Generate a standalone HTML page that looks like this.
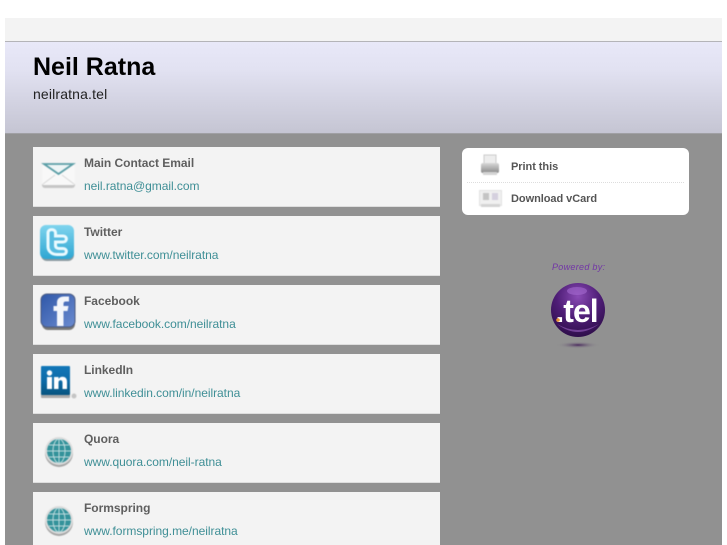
<!DOCTYPE html>
<html><head><meta charset="utf-8">
<style>
html,body{margin:0;padding:0;background:#fff;width:727px;height:545px;overflow:hidden;font-family:"Liberation Sans",sans-serif}
#wrap{position:absolute;left:5px;top:18px;width:717px;height:527px;background:#919191;overflow:hidden}
#top{position:absolute;left:0;top:0;width:717px;height:23px;background:#f3f3f3;border-bottom:1px solid #b4b4b8}
#hd{position:absolute;left:0;top:24px;width:717px;height:91px;background:linear-gradient(#e8e8f8,#e2e2f2 30%,#d3d3e2 65%,#c5c5d3);border-bottom:1px solid #a0a0a4}
h1{position:absolute;left:28px;top:35px;margin:0;font-size:25px;line-height:28px;font-weight:bold;color:#000;white-space:nowrap}
.sub{position:absolute;left:28px;top:68px;font-size:14px;line-height:17px;color:#222;white-space:nowrap;letter-spacing:.15px}
.card{position:absolute;left:28px;width:407px;height:59px;background:#f3f3f3;border-bottom:1px solid #ddd}
.t{position:absolute;left:51px;top:9px;font-size:12px;line-height:15px;font-weight:bold;color:#5f5f5f;white-space:nowrap;letter-spacing:-.03px;filter:blur(.25px)}
.l{position:absolute;left:51px;top:32px;font-size:12px;line-height:15px;color:#3f8f96;white-space:nowrap;letter-spacing:-.04px;filter:blur(.25px)}
.card svg{position:absolute;left:5px;top:6px;filter:blur(.4px)}
#box{position:absolute;left:457px;top:130px;width:227px;height:67px;background:#fff;border-radius:6px}
#box .r{position:absolute;left:49px;font-size:11px;line-height:14px;font-weight:bold;color:#555;white-space:nowrap;letter-spacing:-.05px;filter:blur(.25px)}
#box .d{position:absolute;left:5px;top:34px;width:217px;border-top:1px dotted #ddd}
#box svg{position:absolute;filter:blur(.4px)}
.pw{position:absolute;left:547px;top:244px;font-size:9px;line-height:11px;font-style:italic;color:#7236a6;white-space:nowrap;letter-spacing:.3px}
</style></head><body>
<div id="wrap">
<div id="top"></div>
<div id="hd"></div>
<h1>Neil Ratna</h1>
<div class="sub">neilratna.tel</div>

<div class="card" style="top:129px">
<svg width="40" height="40" viewBox="0 0 40 40"><rect x="4" y="14" width="33" height="21" rx="3" fill="#a8a8a8" opacity=".6"/><rect x="4" y="12" width="33" height="20" rx="2" fill="#f8f8f8"/><path d="M5 31L17 22M36 31L24 22" stroke="#d8d8d8" fill="none"/><path d="M6 11H35L20.500 21Z" fill="#eef5f6" stroke="#5b9ea6" stroke-width="1.800"/></svg>
<div class="t">Main Contact Email</div><div class="l">neil.ratna@gmail.com</div></div>

<div class="card" style="top:198px">
<svg width="40" height="40" viewBox="0 0 40 40"><defs><linearGradient id="tw" x1="0" y1="0" x2="0" y2="1"><stop offset="0" stop-color="#7fd4ee"/><stop offset="1" stop-color="#2fa6d2"/></linearGradient></defs><rect x="3" y="5" width="33" height="34" rx="6" fill="#8a9aa0"/><rect x="2" y="3" width="34" height="34" rx="6" fill="url(#tw)"/><path d="M10 11C10 6.500 17.500 6.500 17.500 11V14H25C29.500 14 29.500 20 25 20H17.500V23.500C17.500 25.500 19 26.500 21 26.500H25C29.500 26.500 29.500 32.500 25 32.500H19C13 32.500 10 28.500 10 24.500Z" fill="#58bce0" stroke="#eafaff" stroke-width="3"/></svg>
<div class="t">Twitter</div><div class="l">www.twitter.com/neilratna</div></div>

<div class="card" style="top:267px">
<svg width="40" height="40" viewBox="0 0 40 40"><defs><linearGradient id="fb" x1="0" y1="0" x2="1" y2="1"><stop offset="0" stop-color="#2f57a8"/><stop offset="1" stop-color="#6b8bd0"/></linearGradient></defs><rect x="4" y="5" width="33" height="34" rx="6" fill="#777"/><rect x="3" y="3" width="34" height="33" rx="6" fill="url(#fb)" stroke="#4a5a80"/><path d="M19 35V20H15.500V15H19V11.500C19 7.500 22 5.500 26 5.500H31V10.500H28C26 10.500 25.500 11.500 25.500 13V15H30.500L29.500 20H25.500V35Z" fill="#f4f6fb"/></svg>
<div class="t">Facebook</div><div class="l">www.facebook.com/neilratna</div></div>

<div class="card" style="top:336px">
<svg width="40" height="40" viewBox="0 0 40 40"><defs><linearGradient id="li" x1="0" y1="0" x2="0" y2="1"><stop offset="0" stop-color="#1277b8"/><stop offset=".5" stop-color="#0d6ba8"/><stop offset="1" stop-color="#07547f"/></linearGradient></defs><rect x="3" y="8" width="29" height="30" rx="1" fill="#aaa"/><rect x="3" y="6" width="29" height="29" rx="1" fill="url(#li)"/><circle cx="36" cy="36" r="2.500" fill="#c4c4c4"/><rect x="9" y="17" width="5" height="12" fill="#fff"/><circle cx="11.500" cy="13" r="2.700" fill="#fff"/><path d="M16 17H20.500V19C21.500 17.300 23 16.700 24.500 16.700C27.500 16.700 29 18.500 29 22V29H24.500V23C24.500 21 23.800 20.300 22.500 20.300C21.200 20.300 20.500 21 20.500 23V29H16Z" fill="#fff"/></svg>
<div class="t">LinkedIn</div><div class="l">www.linkedin.com/in/neilratna</div></div>

<div class="card" style="top:405px">
<svg width="40" height="40" viewBox="0 0 40 40"><circle cx="21" cy="24" r="14" fill="#a5a5a5"/><circle cx="21" cy="22" r="14" fill="#dcdcdc"/><circle cx="21" cy="22" r="12" fill="#33929a"/><g fill="none" stroke="#bcdadd" stroke-width="1"><ellipse cx="21" cy="22" rx="6" ry="12"/><path d="M21 10V34M9 22H33M11 16H31M11 28H31"/></g></svg>
<div class="t">Quora</div><div class="l">www.quora.com/neil-ratna</div></div>

<div class="card" style="top:474px">
<svg width="40" height="40" viewBox="0 0 40 40"><circle cx="21" cy="24" r="14" fill="#a5a5a5"/><circle cx="21" cy="22" r="14" fill="#dcdcdc"/><circle cx="21" cy="22" r="12" fill="#33929a"/><g fill="none" stroke="#bcdadd" stroke-width="1"><ellipse cx="21" cy="22" rx="6" ry="12"/><path d="M21 10V34M9 22H33M11 16H31M11 28H31"/></g></svg>
<div class="t">Formspring</div><div class="l">www.formspring.me/neilratna</div></div>

<div id="box">
<svg style="left:18px;top:6px" width="20" height="22" viewBox="0 0 20 22"><defs><linearGradient id="pr" x1="0" y1="0" x2="0" y2="1"><stop offset="0" stop-color="#d8d8d8"/><stop offset="1" stop-color="#8a8a8a"/></linearGradient></defs><rect x="4" y="1" width="12" height="9" fill="#ededed" stroke="#ccc"/><rect x="1" y="9" width="18" height="10" rx="2" fill="url(#pr)"/><rect x="3" y="18" width="14" height="3" fill="#d4d4d4"/></svg>
<div class="r" style="top:12px">Print this</div>
<div class="d"></div>
<svg style="left:17px;top:42px" width="23" height="18" viewBox="0 0 23 18"><rect x=".5" y=".5" width="22" height="15" fill="#f0f0f0" stroke="#e2e2e2"/><rect x="4" y="3" width="6" height="7" fill="#c4c4c4"/><rect x="13" y="3" width="6" height="7" fill="#d5d0de"/><rect x="2" y="14" width="19" height="3" fill="#d4d4d4"/></svg>
<div class="r" style="top:44px">Download vCard</div>
</div>

<div class="pw">Powered by:</div>
<svg style="position:absolute;left:540px;top:262px;filter:blur(.3px)" width="66" height="72" viewBox="0 0 66 72"><defs><radialGradient id="tel" cx=".5" cy=".25" r=".8"><stop offset="0" stop-color="#8a4bb5"/><stop offset=".5" stop-color="#4e1d76"/><stop offset="1" stop-color="#2a0c44"/></radialGradient><radialGradient id="shd"><stop offset="0" stop-color="#4a2a5e"/><stop offset="1" stop-color="#919191" stop-opacity="0"/></radialGradient></defs><ellipse cx="33" cy="65" rx="21" ry="3.500" fill="url(#shd)"/><circle cx="33" cy="30" r="27" fill="url(#tel)"/><ellipse cx="32" cy="11" rx="10" ry="4" fill="#a56bd0" opacity=".6"/><path d="M12 44Q33 60 54 44Q33 56 12 44Z" fill="#8a55b0" opacity=".7"/><text x="10.400" y="42" font-family="Liberation Sans" font-weight="bold" font-size="32" letter-spacing="-1" fill="#fff">.tel</text><circle cx="13" cy="40" r="1.800" fill="#e8912f"/></svg>
</div>
</body></html>
